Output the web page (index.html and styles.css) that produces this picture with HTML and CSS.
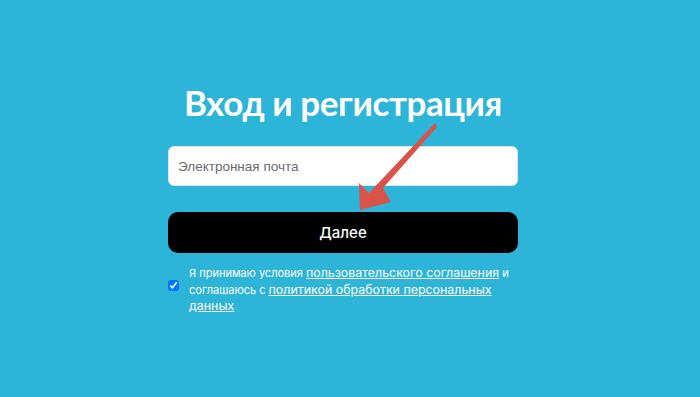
FILE: index.html
```html
<!DOCTYPE html>
<html lang="ru">
<head>
<meta charset="utf-8">
<link rel="stylesheet" href="styles.css">
</head>
<body>
<main class="page">
  <div class="form">
    <h1 class="title">Вход и регистрация</h1>
    <input class="email" type="text" placeholder="Электронная почта">
    <button class="next">Далее</button>
    <label class="agree">
      <input class="check" type="checkbox" checked>
      <span class="agree-text">Я принимаю условия <a href="#" class="link">пользовательского соглашения</a> и соглашаюсь с <a href="#" class="link">политикой обработки персональных данных</a></span>
    </label>
  </div>
  <svg class="arrow" width="700" height="397" viewBox="0 0 700 397">
    <path d="M435 123 L437 127 L383 188 L391 202 L360 210 L359 183 L369 193 Z" fill="#d9534a"/>
  </svg>
</main>
</body>
</html>
```
FILE: styles.css
```css
html, body {
  margin: 0;
  padding: 0;
}
body {
  background: #2db4d9;
  width: 700px;
  height: 397px;
  overflow: hidden;
  font-family: "Inter", "Liberation Sans", sans-serif;
}
.page {
  position: relative;
  width: 700px;
  height: 397px;
}
.form {
  width: 350px;
  margin: 0 0 0 168px;
  padding-top: 78px;
  display: flex;
  flex-direction: column;
}
.title {
  margin: 0 -60px 20px;
  text-align: center;
  white-space: nowrap;
  color: #fff;
  font-family: "Lato", sans-serif;
  font-weight: 700;
  font-size: 35px;
  letter-spacing: -0.4px;
  line-height: 48px;
}
.email {
  box-sizing: border-box;
  height: 40px;
  border: 1px solid #e3e3e3;
  border-radius: 6px;
  background: #fff;
  padding: 0 9px;
  font-family: "Liberation Sans", sans-serif;
  font-size: 13.5px;
  outline: none;
}
.email::placeholder {
  color: #6b6b6b;
}
.next {
  margin-top: 26px;
  height: 41px;
  border: none;
  border-radius: 10px;
  background: #000;
  color: #fff;
  font-family: "Inter", sans-serif;
  font-weight: 500;
  font-size: 15px;
}
.agree {
  margin-top: 12px;
  display: flex;
  align-items: center;
  gap: 10px;
  color: #fff;
  font-size: 11px;
  line-height: 16.5px;
}
.check {
  margin: 0 0 8px;
  width: 11px;
  height: 11px;
  flex: none;
}
.agree-text {
  width: 330px;
}
.link {
  color: #fff;
  font-size: 12.4px;
  text-decoration: underline;
}
.arrow {
  position: absolute;
  left: 0;
  top: 0;
  pointer-events: none;
}
```
